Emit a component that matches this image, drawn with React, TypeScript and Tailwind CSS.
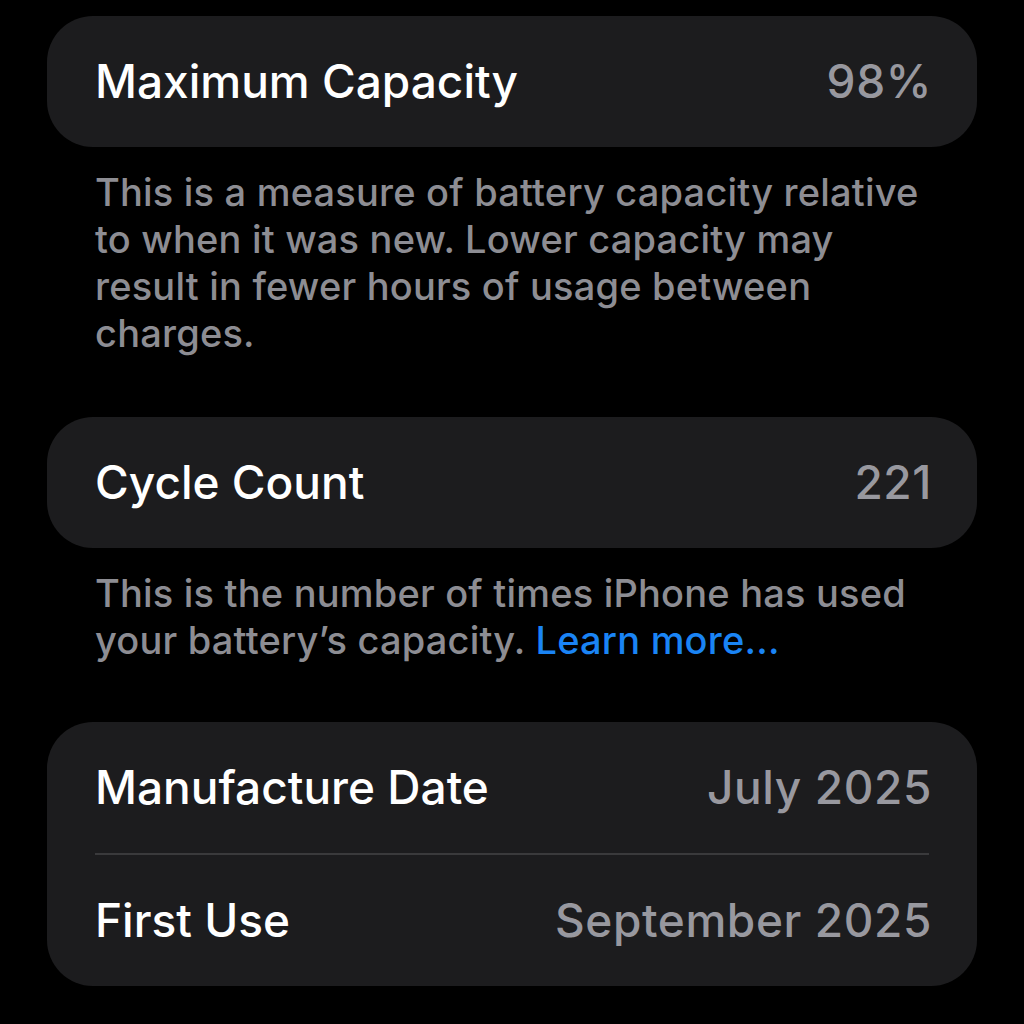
import React from 'react';

const Row: React.FC<{ label: string; value: string }> = ({ label, value }) => (
  <div className="flex items-center justify-between h-[131px]">
    <span className="text-white">{label}</span>
    <span className="text-[#98989f] tracking-[0.6px] -mr-[3px]">{value}</span>
  </div>
);

const App: React.FC = () => {
  return (
    <div
      className="min-h-screen w-[1024px] h-[1024px] bg-black px-[47px] pt-[16px] overflow-hidden"
      style={{ fontFamily: 'Inter, "Noto Sans", sans-serif' }}
    >
      {/* Maximum Capacity */}
      <div className="rounded-[46px] bg-[#1c1c1e] px-[48px] text-[46px] font-medium">
        <Row label="Maximum Capacity" value="98%" />
      </div>
      <p className="px-[48px] pt-[22px] text-[38px] leading-[47px] text-[#8d8d93] font-medium tracking-[0.2px]">
        This is a measure of battery capacity relative to when it was new. Lower capacity may result in fewer
        hours of usage between charges.
      </p>

      {/* Cycle Count */}
      <div className="mt-[60px] rounded-[46px] bg-[#1c1c1e] px-[48px] text-[46px] font-medium">
        <Row label="Cycle Count" value="221" />
      </div>
      <p className="px-[48px] pt-[22px] text-[38px] leading-[47px] text-[#8d8d93] font-medium tracking-[0.2px]">
        This is the number of times iPhone has used your battery’s capacity.{' '}
        <span className="text-[#1a84f5]">Learn more...</span>
      </p>

      {/* Dates */}
      <div className="mt-[58px] rounded-[46px] bg-[#1c1c1e] px-[48px] text-[46px] font-medium">
        <Row label="Manufacture Date" value="July 2025" />
        <div className="h-[2px] bg-[#3a3a3c]" />
        <Row label="First Use" value="September 2025" />
      </div>
    </div>
  );
};

export default App;
